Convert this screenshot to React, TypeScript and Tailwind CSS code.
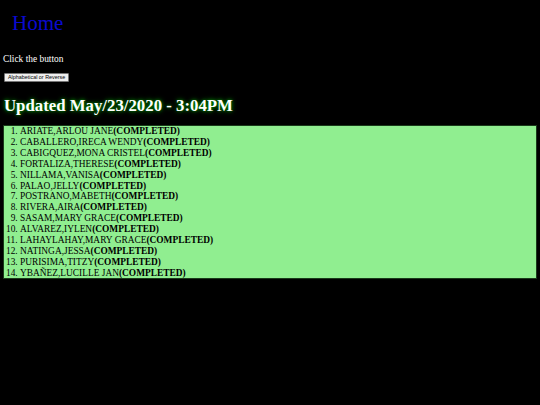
import React from "react";

const names = [
  "ARIATE,ARLOU JANE",
  "CABALLERO,IRECA WENDY",
  "CABIGQUEZ,MONA CRISTEL",
  "FORTALIZA,THERESE",
  "NILLAMA,VANISA",
  "PALAO,JELLY",
  "POSTRANO,MABETH",
  "RIVERA,AIRA",
  "SASAM,MARY GRACE",
  "ALVAREZ,IYLEN",
  "LAHAYLAHAY,MARY GRACE",
  "NATINGA,JESSA",
  "PURISIMA,TITZY",
  "YBAÑEZ,LUCILLE JAN",
];

export default function App() {
  return (
    <div className="w-[540px] h-[405px] bg-black overflow-hidden text-white font-['Liberation_Serif',serif]">
      <div className="pt-[11px] pl-[12px] text-[21px] leading-[25px] text-[#0a0ad0]">Home</div>
      <div className="mt-[18px] pl-[3px] text-[9.4px] leading-[11px]">Click the button</div>
      <div className="mt-[8px] pl-[4px] flex">
        <button className="h-[9px] px-[3px] bg-[#efefef] border border-[#767676] text-black text-[5.4px] leading-[7px] font-['Liberation_Sans',sans-serif] rounded-[1px] flex items-center">
          Alphabetical or Reverse
        </button>
      </div>
      <div className="mt-[13px] pl-[4px] text-[16.8px] leading-[22px] font-bold [text-shadow:0_0_5px_#00a000,0_0_3px_#006000]">
        Updated May/23/2020 - 3:04PM
      </div>
      <div className="mt-[8px] mx-[3px] h-[154px] bg-[#90ee90] border border-[#1a3a1a]">
        <ol className="list-decimal pl-[16px] pt-[0px] text-black text-[9.4px] leading-[10.9px]">
          {names.map((n) => (
            <li key={n}>
              {n}
              <b>(COMPLETED)</b>
            </li>
          ))}
        </ol>
      </div>
    </div>
  );
}
